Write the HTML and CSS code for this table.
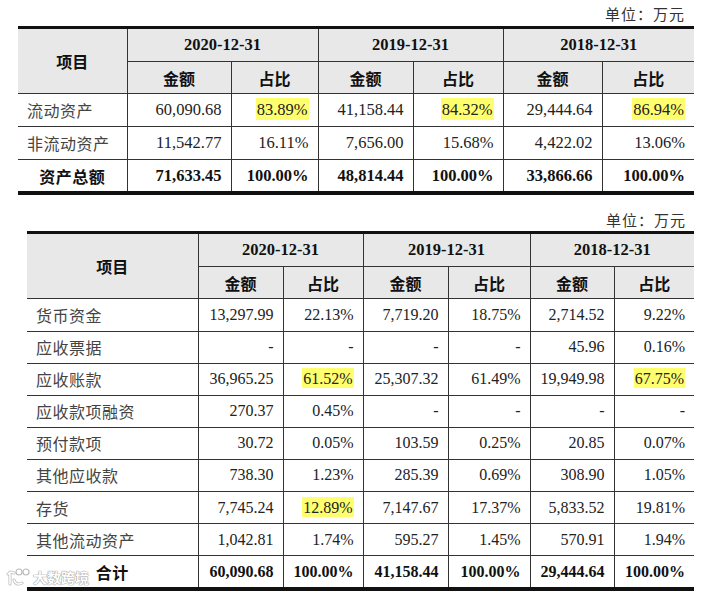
FILE: index.html
```html
<!DOCTYPE html>
<html lang="zh">
<head>
<meta charset="utf-8">
<link rel="stylesheet" href="styles.css">
</head>
<body>
<div class="page">
  <div class="unit unit-1">单位：万元</div>
  <table class="tbl tbl-1">
    <colgroup>
      <col style="width:109px"><col style="width:104px"><col style="width:87px"><col style="width:95px"><col style="width:90px"><col style="width:99px"><col style="width:92px">
    </colgroup>
    <thead>
      <tr><th rowspan="2" class="hd">项目</th><th colspan="2" class="date">2020-12-31</th><th colspan="2" class="date">2019-12-31</th><th colspan="2" class="date">2018-12-31</th></tr>
      <tr><th class="hd">金额</th><th class="hd">占比</th><th class="hd">金额</th><th class="hd">占比</th><th class="hd">金额</th><th class="hd">占比</th></tr>
    </thead>
    <tbody>
      <tr><td class="lbl">流动资产</td><td>60,090.68</td><td><span class="hl">83.89%</span></td><td>41,158.44</td><td><span class="hl">84.32%</span></td><td>29,444.64</td><td><span class="hl">86.94%</span></td></tr>
      <tr><td class="lbl">非流动资产</td><td>11,542.77</td><td>16.11%</td><td>7,656.00</td><td>15.68%</td><td>4,422.02</td><td>13.06%</td></tr>
      <tr class="total"><td class="lbl tlbl">资产总额</td><td>71,633.45</td><td>100.00%</td><td>48,814.44</td><td>100.00%</td><td>33,866.66</td><td>100.00%</td></tr>
    </tbody>
  </table>

  <div class="unit unit-2">单位：万元</div>
  <table class="tbl tbl-2">
    <colgroup>
      <col style="width:171px"><col style="width:85px"><col style="width:80px"><col style="width:85px"><col style="width:82px"><col style="width:84px"><col style="width:80px">
    </colgroup>
    <thead>
      <tr><th rowspan="2" class="hd">项目</th><th colspan="2" class="date">2020-12-31</th><th colspan="2" class="date">2019-12-31</th><th colspan="2" class="date">2018-12-31</th></tr>
      <tr><th class="hd">金额</th><th class="hd">占比</th><th class="hd">金额</th><th class="hd">占比</th><th class="hd">金额</th><th class="hd">占比</th></tr>
    </thead>
    <tbody>
      <tr><td class="lbl">货币资金</td><td>13,297.99</td><td>22.13%</td><td>7,719.20</td><td>18.75%</td><td>2,714.52</td><td>9.22%</td></tr>
      <tr><td class="lbl">应收票据</td><td>-</td><td>-</td><td>-</td><td>-</td><td>45.96</td><td>0.16%</td></tr>
      <tr><td class="lbl">应收账款</td><td>36,965.25</td><td><span class="hl">61.52%</span></td><td>25,307.32</td><td>61.49%</td><td>19,949.98</td><td><span class="hl">67.75%</span></td></tr>
      <tr><td class="lbl">应收款项融资</td><td>270.37</td><td>0.45%</td><td>-</td><td>-</td><td>-</td><td>-</td></tr>
      <tr><td class="lbl">预付款项</td><td>30.72</td><td>0.05%</td><td>103.59</td><td>0.25%</td><td>20.85</td><td>0.07%</td></tr>
      <tr><td class="lbl">其他应收款</td><td>738.30</td><td>1.23%</td><td>285.39</td><td>0.69%</td><td>308.90</td><td>1.05%</td></tr>
      <tr><td class="lbl">存货</td><td>7,745.24</td><td><span class="hl">12.89%</span></td><td>7,147.67</td><td>17.37%</td><td>5,833.52</td><td>19.81%</td></tr>
      <tr><td class="lbl">其他流动资产</td><td>1,042.81</td><td>1.74%</td><td>595.27</td><td>1.45%</td><td>570.91</td><td>1.94%</td></tr>
      <tr class="total"><td class="lbl tlbl">合计</td><td>60,090.68</td><td>100.00%</td><td>41,158.44</td><td>100.00%</td><td>29,444.64</td><td>100.00%</td></tr>
    </tbody>
  </table>

  <div class="watermark">
    <svg class="wm-logo" width="26" height="20" viewBox="0 0 26 20">
      <path d="M4 5 L4 17 M2 7 Q5 4 8 6 M8 13 Q10 19 16 16" fill="none" stroke="#bbb" stroke-width="3" stroke-linecap="round"/>
      <path d="M4 5 L4 17 M2 7 Q5 4 8 6 M8 13 Q10 19 16 16" fill="none" stroke="#fff" stroke-width="1.6" stroke-linecap="round"/>
      <circle cx="13" cy="5" r="3" fill="#fff" stroke="#bbb" stroke-width="1.2"/>
      <circle cx="20" cy="5" r="3" fill="#fff" stroke="#bbb" stroke-width="1.2"/>
    </svg>
    <span class="wm-text">大数跨境</span>
  </div>
</div>
</body>
</html>
```

FILE: styles.css
```css
html, body {
  margin: 0;
  padding: 0;
  background: #fff;
}
.page {
  position: relative;
  width: 702px;
  height: 597px;
  overflow: hidden;
  color: #222;
  font-family: "Liberation Serif", "Noto Sans CJK SC", serif;
}
.unit {
  font-family: "Noto Sans CJK SC", sans-serif;
  font-size: 15px;
  color: #333;
  text-align: right;
  line-height: 18px;
  letter-spacing: 1px;
}
.unit-1 {
  padding-top: 5px;
  height: 21px;
  width: 685px;
}
.unit-2 {
  margin-top: 16px;
  height: 18px;
  width: 686px;
}
.tbl {
  border-collapse: collapse;
  table-layout: fixed;
}
.tbl-1 {
  margin-left: 18px;
  width: 676px;
  border-top: 3px solid #111;
  border-bottom: 4px solid #111;
}
.tbl-2 {
  margin-left: 27px;
  width: 667px;
  border-top: 3px solid #111;
  border-bottom: 4px solid #111;
  margin-top: 2px;
}
.tbl th, .tbl td {
  border: 1px solid #333;
  padding: 0;
}
.tbl tr > *:first-child { border-left: none; }
.tbl tr > *:last-child { border-right: none; }
.tbl thead tr:first-child th:first-child { border-right: 1px solid #333; }
.tbl thead tr:nth-child(2) th:last-child { border-right: none; }
.tbl th {
  background: #e8e8e8;
  text-align: center;
  color: #111;
}
.tbl .hd {
  font-family: "Noto Sans CJK SC", sans-serif;
  font-weight: 700;
  font-size: 16px;
}
.tbl .date {
  font-family: "Liberation Serif", serif;
  font-weight: 700;
  font-size: 16.5px;
}
.tbl-1 thead tr th { height: 31.7px; }
.tbl-1 tbody td { height: 31.7px; }
.tbl-2 thead tr th { height: 31.5px; }
.tbl-2 tbody td { height: 31.1px; }
.tbl td {
  text-align: right;
  padding-right: 9px;
  font-size: 16.5px;
  white-space: nowrap;
}
.tbl-2 td { font-size: 16px; }
.tbl td.lbl {
  text-align: left;
  padding-left: 9px;
  padding-right: 0;
  font-family: "Noto Sans CJK SC", sans-serif;
  font-size: 16px;
  color: #444;
  letter-spacing: 0.5px;
}
.tbl .total td {
  font-weight: 700;
  color: #111;
}
.tbl .total td.tlbl {
  text-align: center;
  padding-left: 0;
  color: #111;
}
.hl {
  background: #ffff6e;
  padding: 2px 1px 1px;
}
.watermark {
  position: absolute;
  left: 6px;
  top: 567px;
  display: flex;
  align-items: center;
  gap: 1px;
}
.wm-text {
  font-family: "Noto Sans CJK SC", sans-serif;
  font-size: 14px;
  line-height: 20px;
  font-weight: 700;
  color: #fff;
  text-shadow: 0 0 1px #999, 0 0 1px #999, 0 0 1px #999;
}
```
